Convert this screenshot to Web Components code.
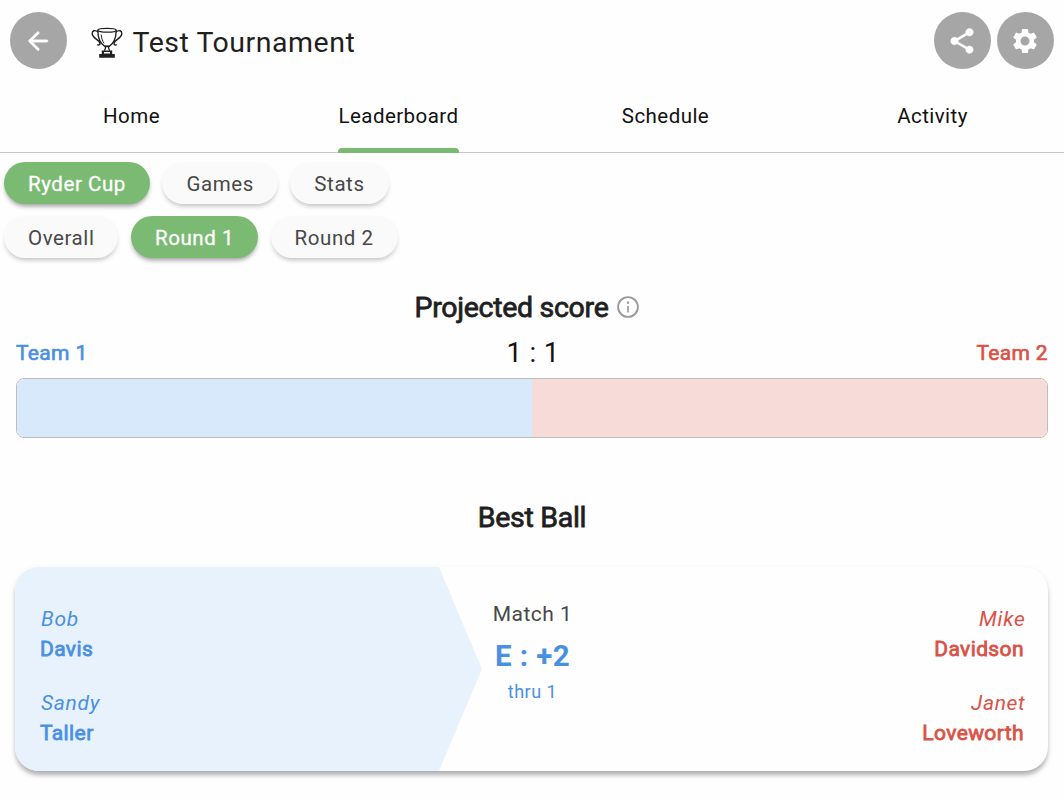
<!DOCTYPE html>
<html lang="en">
<head>
<meta charset="utf-8">
<title>Test Tournament</title>
<style>
html,body{margin:0;padding:0}
body{font-family:Roboto,sans-serif;background:#fefefe;color:#1f1f1f;overflow:hidden}
</style>
</head>
<body>
<tournament-page></tournament-page>
<script>
const define = (name, markup, setup) => {
  const tpl = document.createElement('template');
  tpl.innerHTML = markup;
  customElements.define(name, class extends HTMLElement {
    constructor() {
      super();
      this.attachShadow({mode: 'open'}).append(tpl.content.cloneNode(true));
    }
    connectedCallback() { if (setup) setup(this, this.shadowRoot); }
  });
};

define('round-button', `
<style>
:host{display:flex;align-items:center;justify-content:center;width:57px;height:57px;border-radius:50%;background:#a6a6a6;color:#fff;flex:none}
::slotted(svg){display:block;width:30px;height:30px;fill:currentColor;margin-right:1px}
</style><slot></slot>`);

define('app-header', `
<style>
:host{display:flex;align-items:center;height:81px;box-sizing:border-box;padding:0 10px;gap:6px}
.cup{width:32px;height:32px;margin:4px 0 0 18px;flex:none}
h1{flex:1;margin:5px 0 0 3.500px;font-size:28.5px;line-height:36px;font-weight:400;letter-spacing:.52px}
</style>
<round-button><svg viewBox="0 0 24 24"><path d="M19 11H7.83l4.88-4.88c.39-.39.39-1.03 0-1.42a1 1 0 0 0-1.41 0l-6.59 6.59a1 1 0 0 0 0 1.41l6.59 6.59a1 1 0 1 0 1.41-1.41L7.83 13H19a1 1 0 1 0 0-2z" stroke="#fff" stroke-width=".3"/></svg></round-button>
<svg class="cup" viewBox="0 0 32 32" fill="none" stroke="#1f1f1f">
  <ellipse cx="16" cy="3.3" rx="9.3" ry="1.9" stroke-width="1.3"/>
  <path d="M6.8 3.6c.1 8 2.700 13.200 7 15.700h4.400c4.300-2.500 6.900-7.700 7-15.700" stroke-width="1.4"/>
  <path d="M10.200 7.500c.4 4 1.300 6.600 2.900 8.800" stroke-width="1"/>
  <path d="M7 5C4 2.500 1 3.600 1.200 6.900c.3 4.400 7.700 6.300 7.800 9.500 0 1.700-1.900 2-2.600.9M25 5c3-2.500 6-1.400 5.800 1.900-.3 4.400-7.700 6.300-7.800 9.500 0 1.700 1.900 2 2.600.9" stroke-width="1.4"/>
  <path d="M13.800 19.500h4.400M14.500 20c.1 1.500-.3 2.500-1.200 3.600M17.500 20c.1 1.500.3 2.500 1.200 3.600" stroke-width="1.3"/>
  <path fill="#1f1f1f" stroke="none" fill-rule="evenodd" d="M10.800 23.500h10.400v3.600h2.600v3.700H8.200v-3.700h2.600zM13 25v1.600h6V25z"/>
</svg>
<h1>Test Tournament</h1>
<round-button><svg viewBox="0 0 24 24"><path d="M18 16.080c-.76 0-1.440.3-1.960.77L8.910 12.700c.05-.23.09-.46.09-.7s-.04-.47-.09-.7l7.050-4.110c.54.5 1.250.81 2.040.81 1.660 0 3-1.340 3-3s-1.340-3-3-3-3 1.340-3 3c0 .24.04.47.09.7L8.040 9.810C7.500 9.310 6.790 9 6 9c-1.660 0-3 1.340-3 3s1.340 3 3 3c.79 0 1.500-.31 2.040-.81l7.120 4.160c-.05.21-.08.43-.08.65 0 1.610 1.310 2.920 2.920 2.920s2.920-1.310 2.920-2.920-1.310-2.920-2.920-2.920z" stroke="#fff" stroke-width=".4"/></svg></round-button>
<round-button><svg viewBox="0 0 24 24"><path d="M19.140 12.940c.04-.3.06-.61.06-.94 0-.32-.02-.64-.07-.94l2.030-1.580a.49.49 0 0 0 .12-.61l-1.920-3.320a.488.488 0 0 0-.59-.22l-2.390.96c-.5-.38-1.030-.7-1.620-.94l-.36-2.540a.484.484 0 0 0-.48-.41h-3.840c-.24 0-.43.17-.47.41l-.36 2.540c-.59.24-1.130.57-1.620.94l-2.390-.96c-.22-.08-.47 0-.59.22L2.740 8.870c-.12.21-.08.47.12.61l2.030 1.580c-.05.3-.09.63-.09.94s.02.64.07.94l-2.030 1.580a.49.49 0 0 0-.12.61l1.920 3.320c.12.22.37.29.59.22l2.390-.96c.5.38 1.030.7 1.620.94l.36 2.540c.05.24.24.41.48.41h3.840c.24 0 .44-.17.47-.41l.36-2.540c.59-.24 1.130-.56 1.620-.94l2.390.96c.22.08.47 0 .59-.22l1.920-3.320c.12-.22.07-.47-.12-.61l-2.010-1.580zM12 15.600c-1.980 0-3.600-1.620-3.600-3.600s1.620-3.600 3.600-3.600 3.600 1.620 3.600 3.600-1.620 3.600-3.600 3.600z"/></svg></round-button>`);

define('nav-tab', `
<style>
:host{display:flex;justify-content:center;flex:1 1 0;height:72px;color:#111}
span{display:block;box-sizing:border-box;height:72px;padding-top:23px;font-size:20.5px;line-height:24px;letter-spacing:.45px}
i{display:block;height:5px;margin-top:20px;border-radius:4px 4px 0 0}
:host([active]) i{background:#7aba73}
</style><span><slot></slot><i></i></span>`);

define('nav-tabs', `
<style>
:host{display:block;height:72px;overflow:hidden;background:linear-gradient(#c9c9c9,#c9c9c9) 0 71px/100% 1.500px no-repeat}
div{display:flex;margin:0 -2px}
</style><div><slot></slot></div>`);

define('filter-chip', `
<style>
:host{display:block;height:42px;box-sizing:border-box;padding:0 24px;border-radius:21px;background:#fafafa;color:#484848;font-size:20.5px;line-height:44px;letter-spacing:.57px;white-space:nowrap;box-shadow:0 4px 5px -2px rgba(0,0,0,.22),0 2px 5px rgba(0,0,0,.04)}
:host([selected]){background:#7aba73;color:#fff;-webkit-text-stroke:.3px #fff;box-shadow:0 4px 5px -2px rgba(0,0,0,.35),0 2px 5px rgba(0,0,0,.08)}
</style><slot></slot>`);

define('chip-row', `
<style>
:host{display:flex;gap:12.500px;padding-left:4px}
</style><slot></slot>`);

define('score-bar', `
<style>
:host{display:block;padding:0 16px}
h2{display:flex;justify-content:center;align-items:center;gap:7px;margin:0;height:36px;font-size:28.500px;font-weight:400;-webkit-text-stroke:.8px currentColor;letter-spacing:-.3px;padding-right:8px}
svg{width:26px;height:26px;fill:#9a9a9a}
.row{display:grid;grid-template-columns:1fr auto 1fr;align-items:center;height:36px;margin-top:10px;font-size:21px;letter-spacing:.35px}
.a,.b{-webkit-text-stroke:.65px currentColor}
.a{color:#4a90e2}.b{color:#da5246;text-align:right}
.n{font-size:27.500px;color:#111;position:relative;top:-1px;left:1px}
.bar{display:flex;height:60px;box-sizing:border-box;margin-top:7px;border:1px solid #bdbdbd;border-radius:8px;overflow:hidden}
.bar i{flex:1;background:#d8e9fb}.bar i+i{background:#f6dbd9}
</style>
<h2><span>Projected score</span><svg viewBox="0 0 24 24"><path d="M11 7h2v2h-2zm.25 4h1.500v6h-1.500zM12 2a10 10 0 1 0 0 20 10 10 0 0 0 0-20zm0 18.300a8.300 8.300 0 1 1 0-16.600 8.300 8.300 0 0 1 0 16.600z"/></svg></h2>
<div class="row"><span class="a">Team 1</span><span class="n">1 : 1</span><span class="b">Team 2</span></div>
<div class="bar"><i></i><i></i></div>`);

define('player-name', `
<style>
:host{display:block;height:60px;font-size:21px;line-height:30px}
span{display:block}
.f{font-style:italic;letter-spacing:.7px;padding-left:1px;margin-right:-1.500px}
.l{-webkit-text-stroke:.8px currentColor;letter-spacing:.4px}
</style><span class="f"></span><span class="l"></span>`, (el, root) => {
  root.querySelector('.f').textContent = el.getAttribute('first');
  root.querySelector('.l').textContent = el.getAttribute('last');
});

define('match-card', `
<style>
:host{display:grid;grid-template-columns:1fr auto 1fr;height:204px;box-sizing:border-box;margin:0 16px 0 15px;padding:37px 24px 0 25px;border-radius:24px;box-shadow:0 5px 5px -1px rgba(0,0,0,.28),0 2px 6px rgba(0,0,0,.08);background:#fefefe;position:relative;overflow:hidden}
.lead{position:absolute;left:0;top:0;width:467px;height:204px;fill:#e8f2fd}
.team{position:relative;display:flex;flex-direction:column;gap:24px;color:#4a90e2}
.team.r{color:#da5246;text-align:right}
.mid{text-align:center;color:#4a90e2;padding-left:1px}
.m{color:#484848;font-size:21px;line-height:22px;letter-spacing:.5px;margin-top:-1px}
.s{font-size:29.500px;line-height:36px;font-weight:700;letter-spacing:.4px;margin-top:13px}
.t{font-size:18px;line-height:22px;letter-spacing:.5px;margin-top:7px}
</style>
<svg class="lead" viewBox="0 0 467 204"><path d="M0 0H424L467 102 424 204H0z"/></svg>
<div class="team"><slot name="left"></slot></div>
<div class="mid"><div class="m">Match 1</div><div class="s">E : +2</div><div class="t">thru 1</div></div>
<div class="team r"><slot name="right"></slot></div>`);

define('tournament-page', `
<style>
:host{display:block;width:1064px;height:800px}
chip-row{margin-top:9px}
chip-row+chip-row{margin-top:12px}
score-bar{margin-top:31px}
h2{margin:62px 0 31px;text-align:center;font-size:28.500px;line-height:36px;font-weight:400;-webkit-text-stroke:.8px currentColor;letter-spacing:-.3px}
</style>
<app-header></app-header>
<nav-tabs><nav-tab>Home</nav-tab><nav-tab active>Leaderboard</nav-tab><nav-tab>Schedule</nav-tab><nav-tab>Activity</nav-tab></nav-tabs>
<chip-row><filter-chip selected>Ryder Cup</filter-chip><filter-chip>Games</filter-chip><filter-chip>Stats</filter-chip></chip-row>
<chip-row><filter-chip>Overall</filter-chip><filter-chip selected>Round 1</filter-chip><filter-chip>Round 2</filter-chip></chip-row>
<score-bar></score-bar>
<h2>Best Ball</h2>
<match-card>
  <player-name slot="left" first="Bob" last="Davis"></player-name>
  <player-name slot="left" first="Sandy" last="Taller"></player-name>
  <player-name slot="right" first="Mike" last="Davidson"></player-name>
  <player-name slot="right" first="Janet" last="Loveworth"></player-name>
</match-card>`);
</script>
</body>
</html>
